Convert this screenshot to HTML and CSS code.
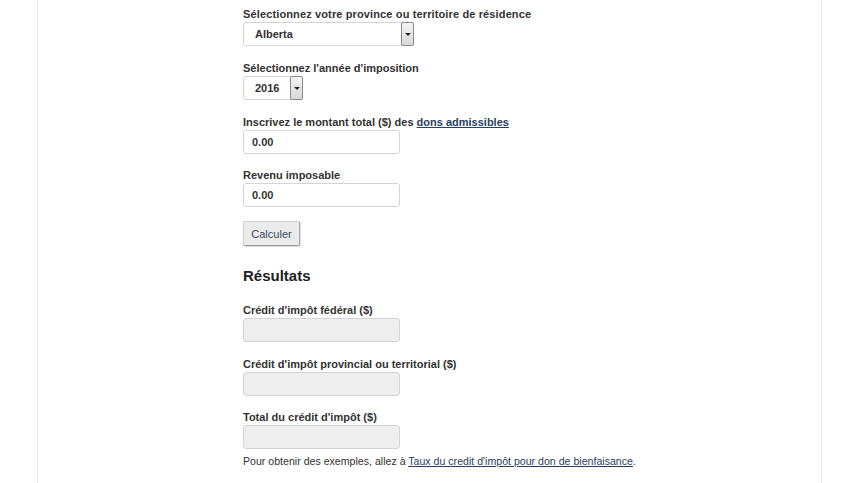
FILE: index.html
```html
<!DOCTYPE html>
<html lang="fr">
<head>
<meta charset="utf-8">
<title>Calculatrice</title>
<link rel="stylesheet" href="styles.css">
</head>
<body>
<div class="page">
  <form class="calc">
    <div class="field wide-gap">
      <label class="lbl lbl-wide">Sélectionnez votre province ou territoire de résidence</label>
      <div class="select wide">
        <span class="select-val">Alberta</span>
        <span class="select-btn"><span class="caret"></span></span>
      </div>
    </div>
    <div class="field wide-gap">
      <label class="lbl">Sélectionnez l'année d'imposition</label>
      <div class="select narrow">
        <span class="select-val">2016</span>
        <span class="select-btn"><span class="caret"></span></span>
      </div>
    </div>
    <div class="field">
      <label class="lbl">Inscrivez le montant total ($) des <a class="lnk" href="#">dons admissibles</a></label>
      <div class="input">0.00</div>
    </div>
    <div class="field">
      <label class="lbl">Revenu imposable</label>
      <div class="input">0.00</div>
    </div>
    <div class="field">
      <button type="button" class="btn">Calculer</button>
    </div>
    <h2 class="title">Résultats</h2>
    <div class="field wide-gap">
      <label class="lbl">Crédit d'impôt fédéral ($)</label>
      <div class="input ro"></div>
    </div>
    <div class="field">
      <label class="lbl">Crédit d'impôt provincial ou territorial ($)</label>
      <div class="input ro"></div>
    </div>
    <div class="field last">
      <label class="lbl">Total du crédit d'impôt ($)</label>
      <div class="input ro"></div>
    </div>
    <p class="note">Pour obtenir des exemples, allez à <a class="lnk" href="#">Taux du credit d'impôt pour don de bienfaisance</a>.</p>
  </form>
</div>
</body>
</html>
```
FILE: styles.css
```css
html, body {
  margin: 0;
  padding: 0;
  background: #fff;
}
body {
  font-family: "Liberation Sans", Arial, sans-serif;
  color: #333;
}
.page {
  margin-left: 37px;
  width: 783px;
  height: 483px;
  border-left: 1px solid #e3e3e3;
  border-right: 1px solid #e3e3e3;
  overflow: hidden;
}
.calc {
  padding: 7px 0 0 205px;
}
.field {
  margin-bottom: 14px;
}
.field.wide-gap {
  margin-bottom: 15px;
}
.field.last {
  margin-bottom: 5px;
}
.lbl {
  display: block;
  font-size: 11px;
  font-weight: bold;
  line-height: 14px;
  margin-bottom: 1px;
  color: #333;
}
.lbl-wide {
  letter-spacing: 0.13px;
}
.lnk {
  color: #284162;
  text-decoration: underline;
}
.select {
  display: flex;
  height: 24px;
  box-sizing: border-box;
  border: 1px solid #d4d4d4;
  border-radius: 3px;
  background: #fff;
}
.select.wide { width: 171px; }
.select.narrow { width: 60px; }
.select-val {
  flex: 1;
  font-size: 11px;
  font-weight: bold;
  line-height: 22px;
  padding-left: 11px;
  color: #333;
}
.select-btn {
  width: 11px;
  margin: -1px -1px -1px 0;
  border: 1px solid #8a8a8a;
  border-radius: 2px;
  background: linear-gradient(#f4f4f4, #d8d8d8);
  display: flex;
  align-items: center;
  justify-content: center;
}
.caret {
  width: 0;
  height: 0;
  border-left: 3px solid transparent;
  border-right: 3px solid transparent;
  border-top: 3px solid #222;
}
.input {
  width: 157px;
  height: 24px;
  box-sizing: border-box;
  border: 1px solid #d4d4d4;
  border-radius: 3px;
  background: #fff;
  font-size: 11px;
  font-weight: bold;
  line-height: 22px;
  padding-left: 8px;
  color: #333;
}
.input.ro {
  background: #eeeeee;
}
.btn {
  display: block;
  width: 57px;
  height: 25px;
  padding: 0;
  border: 1px solid #cfcfcf;
  border-bottom-color: #999;
  border-right-color: #aaa;
  border-radius: 2px;
  background: #ebebeb;
  font-family: "Liberation Sans", Arial, sans-serif;
  font-size: 11px;
  color: #3a4a5e;
  box-shadow: 1px 1px 1px rgba(0,0,0,0.15);
}
.title {
  margin: 21px 0 18px;
  font-size: 15px;
  font-weight: bold;
  line-height: 18px;
  color: #222;
}
.note {
  margin: 0;
  font-size: 10.6px;
  line-height: 14px;
  color: #333;
}
```
